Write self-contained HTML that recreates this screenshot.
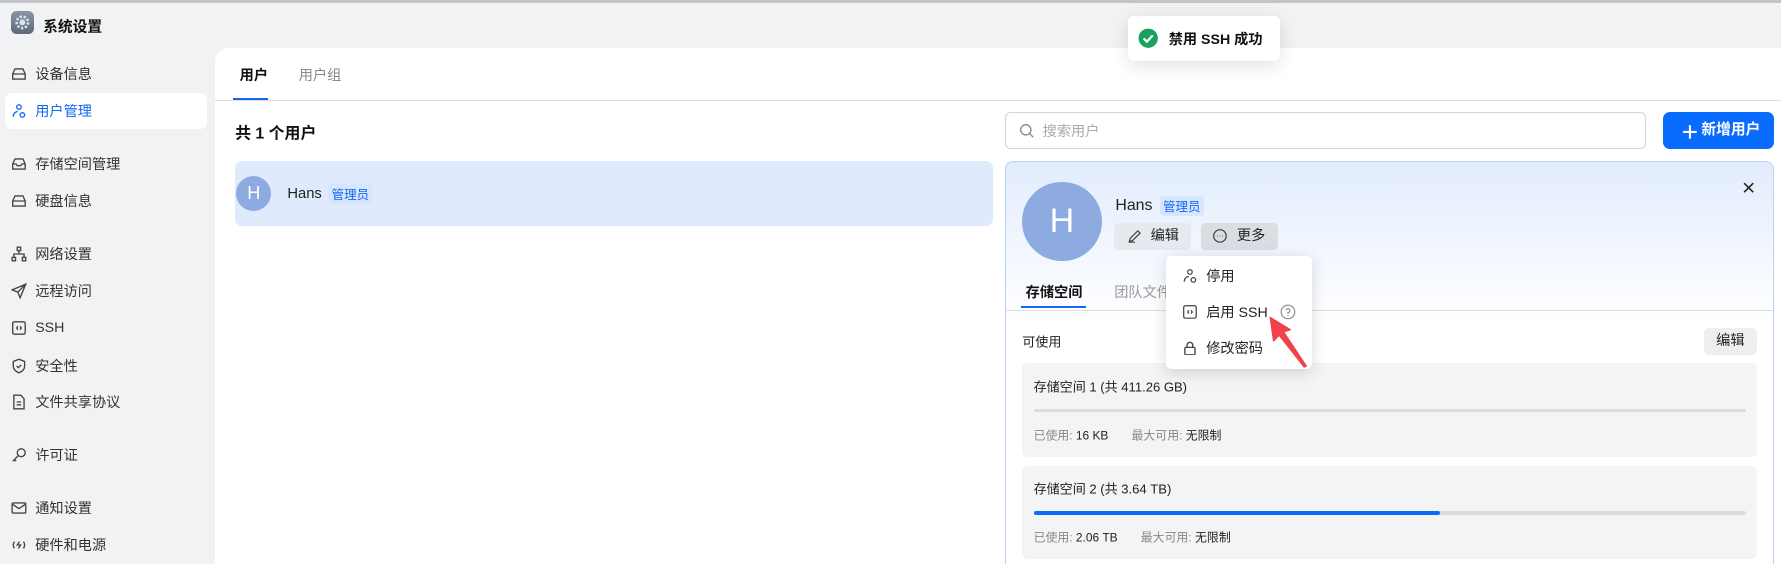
<!DOCTYPE html>
<html><head><meta charset="utf-8"><style>
*{box-sizing:border-box;margin:0;padding:0}
html,body{width:1781px;height:564px;overflow:hidden;background:#f1f2f4}
#w{zoom:1.1358;width:1568px;height:497px;position:relative;font-family:"Liberation Sans","Noto Sans CJK SC",sans-serif;font-size:12.5px;color:#222;overflow:hidden}
.a{position:absolute}
.t{position:absolute;transform:translateY(-50%);white-space:nowrap}
.nav{left:31px;color:#333;font-size:12.5px}
.ic{position:absolute;transform:translateY(-50%);left:10px;width:14px;height:14px}
.tag{position:absolute;background:#d6e6ff;color:#1668f0;font-size:11px;padding:1px 3px;border-radius:3px;transform:translateY(-50%)}
.card{position:absolute;left:900px;width:647px;height:82px;background:#f4f4f4;border-radius:5px}
.bar{position:absolute;left:10px;right:10px;height:3px;background:#dcdcdc;border-radius:2px}
.g{color:#888}
</style></head><body><div id="w">
<div class="a" style="left:0;top:0;width:1568px;height:3px;background:#c4c4c4"></div>
<div class="a" style="left:10px;top:10px;width:20px;height:20px;border-radius:5px;background:linear-gradient(#8a96a6,#5d6878)"><svg width="20" height="20" viewBox="0 0 20 20"><circle cx="10" cy="10" r="5" fill="none" stroke="#dfe3ea" stroke-width="2.4" stroke-dasharray="2 1.5"/><circle cx="10" cy="10" r="2.6" fill="#dfe3ea"/></svg></div>
<div class="t" style="left:38px;top:23px;font-size:13px;font-weight:bold;color:#111">系统设置</div>

<div class="a" style="left:4px;top:82px;width:178px;height:32px;background:#fff;border-radius:6px"></div>
<svg class="ic" style="top:65px" viewBox="0 0 14 14" fill="none" stroke="#444" stroke-width="1.2"><path d="M1.5 7L3.5 2.5h7L12.5 7v4.5h-11z M1.5 7h11"/></svg><div class="t nav" style="top:65px">设备信息</div>
<svg class="ic" style="top:98px" viewBox="0 0 14 14" fill="none" stroke="#1668f0" stroke-width="1.2"><circle cx="7" cy="3.5" r="2"/><path d="M2 12c0-3 2-4.5 4-4.5"/><circle cx="10" cy="10.5" r="2"/></svg><div class="t nav" style="top:98px;color:#1668f0">用户管理</div>
<svg class="ic" style="top:144px" viewBox="0 0 14 14" fill="none" stroke="#444" stroke-width="1.2"><path d="M1.5 7L3.5 2.5h7L12.5 7v4.5h-11z M1.5 7h3l1 1.5h3l1-1.5h3"/></svg><div class="t nav" style="top:144px">存储空间管理</div>
<svg class="ic" style="top:177px" viewBox="0 0 14 14" fill="none" stroke="#444" stroke-width="1.2"><path d="M1.5 7L3.5 2.5h7L12.5 7v4.5h-11z M1.5 7h11"/></svg><div class="t nav" style="top:177px">硬盘信息</div>
<svg class="ic" style="top:224px" viewBox="0 0 14 14" fill="none" stroke="#444" stroke-width="1.2"><rect x="5.5" y="1" width="3" height="3"/><rect x="1" y="10" width="3" height="3"/><rect x="10" y="10" width="3" height="3"/><path d="M7 4v3M2.5 10V7h9v3"/></svg><div class="t nav" style="top:224px">网络设置</div>
<svg class="ic" style="top:256px" viewBox="0 0 14 14" fill="none" stroke="#444" stroke-width="1.2"><path d="M13 1L1 6l5 2 2 5z M6 8l7-7"/></svg><div class="t nav" style="top:256px">远程访问</div>
<svg class="ic" style="top:289px" viewBox="0 0 14 14" fill="none" stroke="#444" stroke-width="1.2"><rect x="1.5" y="1.5" width="11" height="11" rx="1.5"/><path d="M6 5.5L5 7l1 1.5M8 5.5L9 7 8 8.5"/></svg><div class="t nav" style="top:289px">SSH</div>
<svg class="ic" style="top:322px" viewBox="0 0 14 14" fill="none" stroke="#444" stroke-width="1.2"><path d="M7 1l5 2v4c0 3-2.5 5-5 6-2.5-1-5-3-5-6V3z M5 7l1.5 1.5L9 6"/></svg><div class="t nav" style="top:322px">安全性</div>
<svg class="ic" style="top:354px" viewBox="0 0 14 14" fill="none" stroke="#444" stroke-width="1.2"><path d="M2.5 1h6l3 3v9h-9z M5 7h4M5 9.5h4"/></svg><div class="t nav" style="top:354px">文件共享协议</div>
<svg class="ic" style="top:401px" viewBox="0 0 14 14" fill="none" stroke="#444" stroke-width="1.2"><circle cx="9" cy="5" r="3.5"/><path d="M6.5 7.5L1.5 12.5M3 11l1.5 1.5"/></svg><div class="t nav" style="top:401px">许可证</div>
<svg class="ic" style="top:447px" viewBox="0 0 14 14" fill="none" stroke="#444" stroke-width="1.2"><rect x="1" y="2.5" width="12" height="9" rx="1"/><path d="M1 3.5l6 4 6-4"/></svg><div class="t nav" style="top:447px">通知设置</div>
<svg class="ic" style="top:480px" viewBox="0 0 14 14" fill="none" stroke="#444" stroke-width="1.2"><path d="M3 4Q1 7 3 10M11 4q2 3 0 6M7.5 4L5.5 7h3l-2 3"/></svg><div class="t nav" style="top:480px">硬件和电源</div>

<div class="a" style="left:189px;top:42px;width:1400px;height:470px;background:#fff;border-top-left-radius:12px"></div>
<div class="t" style="left:211px;top:66px;font-weight:bold;color:#111">用户</div>
<div class="t" style="left:263px;top:66px;color:#888">用户组</div>
<div class="a" style="left:189px;top:88px;width:1400px;height:1px;background:#ddd"></div>
<div class="a" style="left:205px;top:86px;width:31px;height:2px;background:#1668f0"></div>
<div class="t" style="left:207px;top:116px;font-size:14px;font-weight:bold;color:#111">共 1 个用户</div>
<div class="a" style="left:207px;top:142px;width:667px;height:57px;background:#dfeafd;border-radius:6px"></div>
<div class="a" style="left:208px;top:155px;width:31px;height:31px;border-radius:50%;background:#8dabe0;color:#fff;font-size:16px;text-align:center;line-height:31px">H</div>
<div class="t" style="left:253px;top:171px;font-size:13px">Hans</div>
<div class="tag" style="left:289px;top:171px">管理员</div>

<div class="a" style="left:885px;top:99px;width:564px;height:32px;border:1px solid #d6d6d6;border-radius:5px"></div>
<svg class="a" style="left:897px;top:108px" width="14" height="14" viewBox="0 0 14 14" fill="none" stroke="#888" stroke-width="1.2"><circle cx="6" cy="6" r="4.5"/><path d="M9.5 9.5l3 3"/></svg>
<div class="t" style="left:918px;top:115px;color:#aaa">搜索用户</div>
<div class="a" style="left:1464px;top:99px;width:98px;height:32px;background:#0a6cff;border-radius:6px;color:#fff;font-weight:bold;font-size:13px;line-height:32px;padding-left:34px">新增用户</div>
<svg class="a" style="left:1481px;top:109px" width="14" height="14" viewBox="0 0 14 14" stroke="#fff" stroke-width="1.8"><path d="M7 1v12M1 7h12"/></svg>

<div class="a" style="left:885px;top:142px;width:677px;height:370px;border:1px solid #bcd1f3;border-radius:7px;background:linear-gradient(#e2ecfd 0,#fff 140px)"></div>
<div class="a" style="left:900px;top:160px;width:70px;height:70px;border-radius:50%;background:#8dabe0;color:#fff;font-size:30px;text-align:center;line-height:70px">H</div>
<div class="t" style="left:982px;top:181px;font-size:14px">Hans</div>
<div class="tag" style="left:1021px;top:181px">管理员</div>
<div class="a" style="left:981px;top:196px;width:68px;height:24px;background:#e6e9ee;border-radius:4px;line-height:24px;padding-left:32px">编辑</div>
<svg class="a" style="left:992px;top:201px" width="14" height="14" viewBox="0 0 14 14" fill="none" stroke="#444" stroke-width="1.1"><path d="M2 12l1-3 6.5-6.5 2 2L5 11z M2 12.5h5"/></svg>
<div class="a" style="left:1057px;top:196px;width:68px;height:24px;background:#dadde2;border-radius:4px;line-height:24px;padding-left:32px">更多</div>
<svg class="a" style="left:1067px;top:201px" width="14" height="14" viewBox="0 0 14 14" fill="none" stroke="#444" stroke-width="1.1"><circle cx="7" cy="7" r="5.5"/><path d="M4.5 7h.5M6.8 7h.5M9 7h.5"/></svg>
<svg class="a" style="left:1535px;top:160px" width="10" height="10" stroke="#222" stroke-width="1.4"><path d="M1 1l8 8M9 1l-8 8"/></svg>

<div class="t" style="left:903px;top:257px;font-weight:bold;color:#111">存储空间</div>
<div class="t" style="left:981px;top:257px;color:#999">团队文件</div>
<div class="a" style="left:899px;top:269px;width:57px;height:2px;background:#1668f0"></div>
<div class="a" style="left:886px;top:273px;width:675px;height:1px;background:#ddd"></div>
<div class="t" style="left:900px;top:300px;font-size:11.5px">可使用</div>
<div class="a" style="left:1500px;top:289px;width:47px;height:24px;background:#eee;border-radius:5px;text-align:center;line-height:24px">编辑</div>

<div class="card" style="top:320px"><div class="t" style="left:10px;top:20px;font-size:11.5px">存储空间 1 (共 411.26 GB)</div><div class="bar" style="top:40px"></div><div class="t" style="left:10px;top:63px;font-size:10.5px"><span class="g">已使用:</span> 16 KB &nbsp; &nbsp; &nbsp; <span class="g">最大可用:</span> 无限制</div></div>
<div class="card" style="top:410px"><div class="t" style="left:10px;top:20px;font-size:11.5px">存储空间 2 (共 3.64 TB)</div><div class="bar" style="top:40px"><div style="width:57%;height:3px;background:#0a6cff;border-radius:2px"></div></div><div class="t" style="left:10px;top:63px;font-size:10.5px"><span class="g">已使用:</span> 2.06 TB &nbsp; &nbsp; &nbsp; <span class="g">最大可用:</span> 无限制</div></div>

<div class="a" style="left:1027px;top:225px;width:128px;height:100px;background:#fff;border-radius:5px;box-shadow:0 3px 14px rgba(0,0,0,.15)"></div>
<svg class="a" style="left:1041px;top:236px" width="14" height="14" viewBox="0 0 14 14" fill="none" stroke="#444" stroke-width="1.1"><circle cx="7" cy="3.5" r="2"/><path d="M2 12c0-3 2-4.5 4-4.5"/><circle cx="10" cy="10.5" r="2"/></svg>
<div class="t" style="left:1062px;top:243px">停用</div>
<svg class="a" style="left:1041px;top:268px" width="14" height="14" viewBox="0 0 14 14" fill="none" stroke="#444" stroke-width="1.1"><rect x="1.5" y="1.5" width="11" height="11" rx="1.5"/><path d="M6 5.5L5 7l1 1.5M8 5.5L9 7 8 8.5"/></svg>
<div class="t" style="left:1062px;top:275px">启用 SSH</div>
<svg class="a" style="left:1127px;top:268px" width="14" height="14" viewBox="0 0 14 14" fill="none" stroke="#888" stroke-width="1"><circle cx="7" cy="7" r="6"/><path d="M5.3 5.5a1.7 1.7 0 1 1 1.7 2v1.2M7 10v.8"/></svg>
<svg class="a" style="left:1041px;top:299px" width="14" height="14" viewBox="0 0 14 14" fill="none" stroke="#444" stroke-width="1.2"><rect x="2.5" y="6.5" width="9" height="6.5" rx="1"/><path d="M4.5 6.5V4.5a2.5 2.5 0 0 1 5 0v2"/></svg>
<div class="t" style="left:1062px;top:306px">修改密码</div>
<svg class="a" style="left:1110px;top:270px" width="50" height="60"><path d="M8 9L11 30L16 25L38 53L40 52L20 22L26 20z" fill="#f0424b" stroke="#f0424b" stroke-width="1" stroke-linejoin="round"/></svg>

<div class="a" style="left:993px;top:14px;width:134px;height:40px;background:#fff;border-radius:5px;box-shadow:0 4px 16px rgba(0,0,0,.12)"></div>
<svg class="a" style="left:1002px;top:25px" width="18" height="18" viewBox="0 0 18 18"><circle cx="9" cy="9" r="8.5" fill="#19a15f"/><path d="M5 9.2l2.8 2.8L13 6.5" fill="none" stroke="#fff" stroke-width="2"/></svg>
<div class="t" style="left:1029px;top:34px;font-weight:bold;font-size:12.5px;color:#111">禁用 SSH 成功</div>
</div></body></html>
